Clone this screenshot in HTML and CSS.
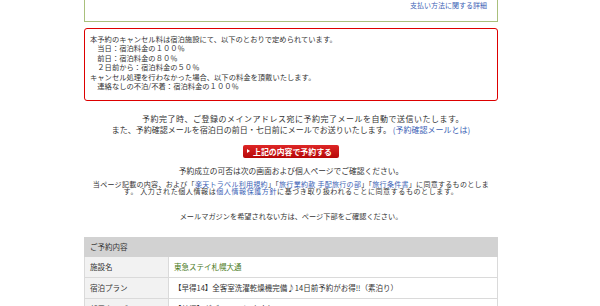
FILE: index.html
```html
<!DOCTYPE html>
<html lang="ja">
<head>
<meta charset="utf-8">
<title>予約内容の確認</title>
<link rel="stylesheet" href="styles.css">
</head>
<body>
<div class="page">
  <div class="paybox"><a class="link" href="#">支払い方法に関する詳細</a></div>

  <div class="cancel">
    <p>本予約のキャンセル料は宿泊施設にて、以下のとおりで定められています。</p>
    <p>　当日：宿泊料金の１００％</p>
    <p>　前日：宿泊料金の８０％</p>
    <p>　２日前から：宿泊料金の５０％</p>
    <p>キャンセル処理を行わなかった場合、以下の料金を頂戴いたします。</p>
    <p>　連絡なしの不泊/不着：宿泊料金の１００％</p>
  </div>

  <div class="notice">
    <p class="l1">予約完了時、ご登録のメインアドレス宛に予約完了メールを自動で送信いたします。</p>
    <p class="l2">また、予約確認メールを宿泊日の前日・七日前にメールでお送りいたします。 <a class="link" href="#">(予約確認メールとは)</a></p>
  </div>

  <div class="btnrow">
    <a class="btn" href="#"><span class="tri"></span>上記の内容で予約する</a>
  </div>

  <p class="confirm">予約成立の可否は次の画面および個人ページでご確認ください。</p>

  <div class="agree">
    <p class="a1">当ページ記載の内容、および「<a class="link" href="#">楽天トラベル利用規約</a>」「<a class="link" href="#">旅行業約款 手配旅行の部</a>」「<a class="link" href="#">旅行条件書</a>」に同意するものとしま</p>
    <p class="a2">す。 入力された個人情報は<a class="link" href="#">個人情報保護方針</a>に基づき取り扱われることに同意するものとします。</p>
  </div>

  <p class="mail">メールマガジンを希望されない方は、ページ下部をご確認ください。</p>

  <table class="summary">
    <tr><th class="head" colspan="2">ご予約内容</th></tr>
    <tr><th>施設名</th><td><span class="hotel">東急ステイ札幌大通</span></td></tr>
    <tr><th>宿泊プラン</th><td>【早得14】全客室洗濯乾燥機完備♪14日前予約がお得!!（素泊り）</td></tr>
    <tr><th>部屋タイプ</th><td>【禁煙】ダブルルーム（1名）</td></tr>
  </table>
</div>
</body>
</html>
```

FILE: styles.css
```css
html, body {
  margin: 0;
  padding: 0;
  background: #ffffff;
}

body {
  font-family: "Noto Sans CJK JP", "Noto Sans", sans-serif;
  color: #333333;
}

p {
  margin: 0;
}

.link {
  color: #3b62b5;
  text-decoration: none;
}

.page {
  width: 414px;
  margin-left: 84px;
}

.paybox {
  box-sizing: border-box;
  height: 22px;
  border: 1px solid #a9c07c;
  border-top: none;
  padding-right: 10px;
  text-align: right;
  font-size: 7px;
  line-height: 10px;
}

.cancel {
  margin-top: 6px;
  border: 1px solid #dd0000;
  border-radius: 3px;
  padding: 6px 5px 9px;
  font-size: 7.3px;
  line-height: 9.4px;
}

.notice {
  margin-top: 13px;
  text-align: center;
  font-size: 8px;
  line-height: 10.3px;
}

.notice .l1 {
  padding-left: 24px;
  letter-spacing: 0.5px;
}

.btnrow {
  margin-top: 9.5px;
  display: flex;
  justify-content: center;
}

.btn {
  box-sizing: border-box;
  display: flex;
  align-items: center;
  gap: 3px;
  width: 96px;
  height: 13px;
  padding-left: 4px;
  background: linear-gradient(#de2626, #b60808);
  border-radius: 2px;
  color: #ffffff;
  font-weight: bold;
  font-size: 7.9px;
  line-height: 13px;
  text-decoration: none;
}

.tri {
  width: 0;
  height: 0;
  border-left: 3px solid #ffffff;
  border-top: 2px solid transparent;
  border-bottom: 2px solid transparent;
}

.confirm {
  margin-top: 8px;
  text-align: center;
  font-size: 7.75px;
  line-height: 10px;
}

.agree {
  margin-top: 5px;
  text-align: center;
  font-size: 7px;
  line-height: 7px;
}

.agree .a1 {
  letter-spacing: 0.3px;
}

.agree .a2 {
  letter-spacing: 0.6px;
}

.mail {
  margin-top: 16px;
  text-align: center;
  font-size: 7.2px;
  line-height: 10px;
}

.summary {
  margin-top: 16px;
  width: 100%;
  border-collapse: collapse;
  font-size: 7.5px;
}

.summary th,
.summary td {
  border: 1px solid #dadada;
  height: 20px;
  padding: 0 5px;
  text-align: left;
  font-weight: normal;
  line-height: 10px;
}

.summary th {
  width: 73px;
  background: #f2f2f2;
}

.summary th.head {
  height: 18px;
  background: #d2d2d2;
  border-color: #d2d2d2;
}

.hotel {
  color: #4a7a1c;
}
```
